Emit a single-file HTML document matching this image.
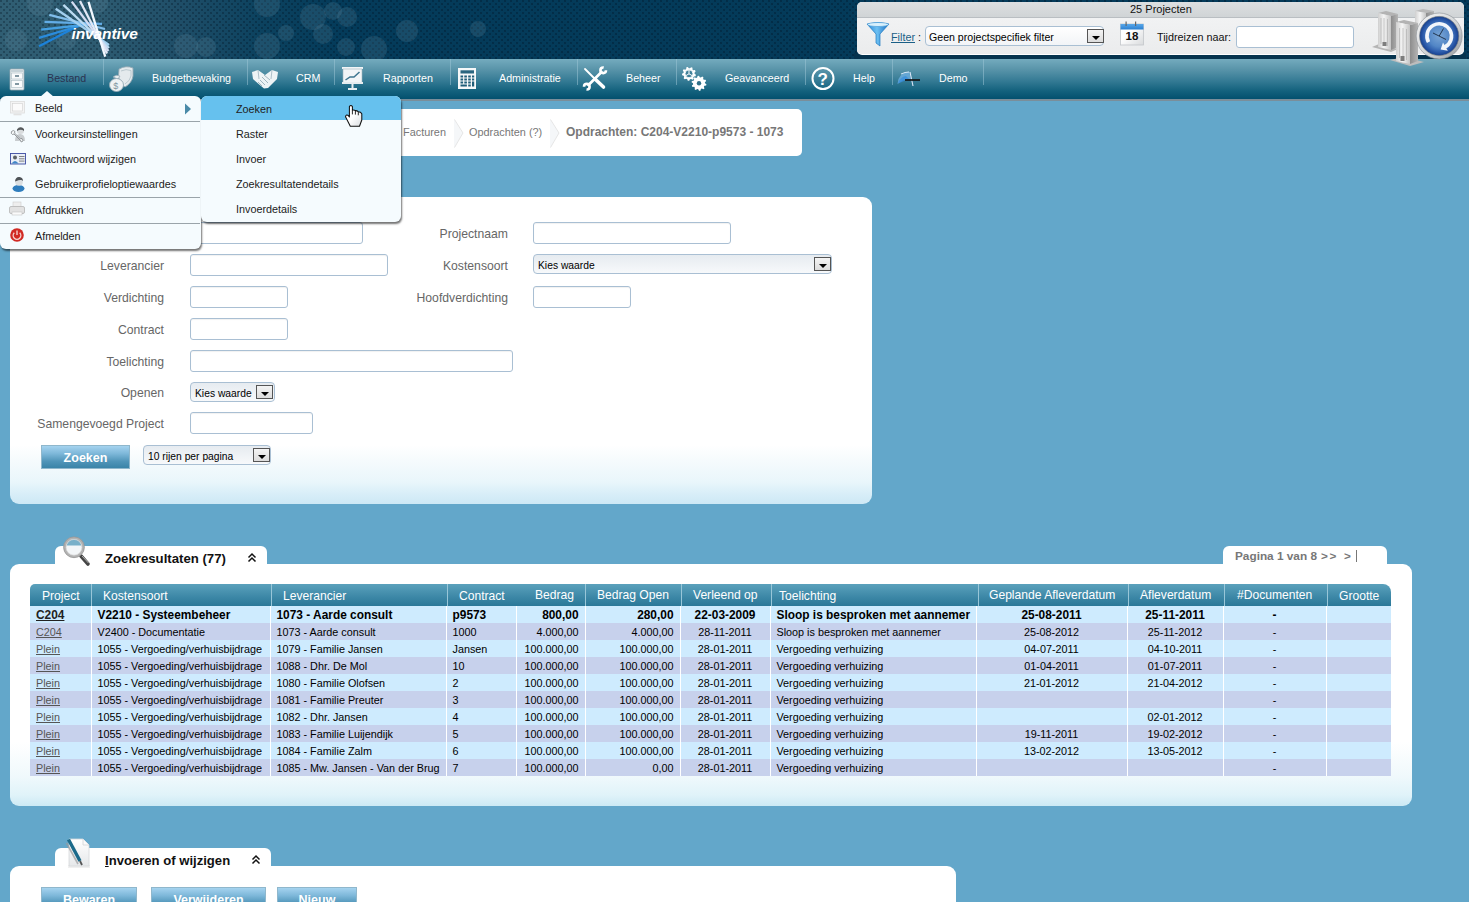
<!DOCTYPE html>
<html><head><meta charset="utf-8">
<style>
*{margin:0;padding:0;box-sizing:border-box}
html,body{width:1469px;height:902px;overflow:hidden}
body{background:#63a7ca;font-family:"Liberation Sans",sans-serif;position:relative;color:#000}
.abs{position:absolute}
#hdr{left:0;top:0;width:1469px;height:59px;background:radial-gradient(circle at 1px 1px,rgba(0,15,30,.3) 0.8px,transparent 1.2px) 0 0/6px 6px,radial-gradient(circle at 1px 1px,rgba(0,15,30,.3) 0.8px,transparent 1.2px) 3px 3px/6px 6px,linear-gradient(90deg,#305e73 0px,#2d5b71 100px,#1f4e68 180px,#0c425f 260px,#043b5a 340px,#033a59 1469px)}
#nav{left:0;top:59px;width:1469px;height:40px;background:linear-gradient(#74abbe 0%,#5a95aa 25%,#347a94 55%,#13617d 80%,#03506e 100%)}
#navline{left:0;top:99px;width:1469px;height:2px;background:#7a8e9a}
.sep{position:absolute;top:59px;width:1px;height:26px;background:rgba(160,200,215,.5)}
.nt{position:absolute;top:71px;font-size:10.7px;color:#fff;line-height:14px;white-space:nowrap}
.panel{position:absolute;background:#fff;border-radius:9px}
.lbl{position:absolute;font-size:12.2px;color:#666;text-align:right;white-space:nowrap;line-height:14px}
.inp{position:absolute;background:#fff;border:1px solid #a9bfd3;border-radius:3px;box-shadow:inset 0 1px 1px rgba(0,0,0,.06)}
.sel{position:absolute;border:1px solid #a9bfd3;border-radius:4px;background:linear-gradient(#e6ebf0,#f7f9fb);font-size:10.3px;color:#000;line-height:20px;padding-left:4px;padding-top:1px;white-space:nowrap}
.selb{position:absolute;width:17px;height:14px;border:1px solid #555;background:linear-gradient(#f4f4f4,#dcdcdc)}
.selb:after{content:"";position:absolute;left:4px;top:6px;border-left:4px solid transparent;border-right:4px solid transparent;border-top:4px solid #000}
.btn{position:absolute;height:24px;background:linear-gradient(#a5d3ef 0%,#7db7d9 35%,#4f94b8 70%,#3a84a8 100%);border:1px solid #8fb7cc;color:#fff;font-weight:bold;font-size:12.5px;text-align:center;line-height:24px}
.menu{position:absolute;background:#f5fbfe;border-radius:6px;box-shadow:1px 2px 2px rgba(0,0,0,.55)}
.mi{position:absolute;left:35px;font-size:10.8px;color:#222;white-space:nowrap;line-height:14px}
.msep{position:absolute;left:0;width:200px;height:1px;background:#9aa4aa}
table{border-collapse:collapse;position:absolute;table-layout:fixed;font-size:10.8px;line-height:17px}
td:first-child{border-left:0}
.br td>*,.br td{}
.br td{padding-top:2px;line-height:15px}
.hd{position:absolute;top:589px;font-size:12.1px;line-height:14px;color:#fff;white-space:nowrap}
td{font-size:inherit;height:17px;max-height:17px;line-height:16px;padding:1px 6px 0 6px;white-space:nowrap;overflow:hidden;border-left:1px solid #fff}
</style></head><body>
<div id="hdr" class="abs"></div>
<div id="nav" class="abs"></div>
<div id="navline" class="abs"></div>
<!-- bokeh circles -->
<svg class="abs" style="left:0;top:0" width="860" height="59">
<g fill="#6a93a6" fill-opacity="0.2">
<circle cx="40" cy="3" r="13"/><circle cx="98" cy="3" r="10"/><circle cx="66" cy="40" r="10"/><circle cx="186" cy="46" r="12"/><circle cx="206" cy="47" r="10"/>
<circle cx="267" cy="4" r="13"/><circle cx="267" cy="46" r="13"/><circle cx="313" cy="17" r="13"/><circle cx="333" cy="11" r="9"/><circle cx="347" cy="17" r="10"/>
<circle cx="286" cy="33" r="8"/><circle cx="323" cy="34" r="10"/><circle cx="346" cy="47" r="9"/><circle cx="374" cy="49" r="13"/><circle cx="407" cy="31" r="11"/>
<circle cx="478" cy="29" r="8"/><circle cx="16" cy="40" r="11"/>
</g>
</svg>
<!-- logo -->
<svg class="abs" style="left:30px;top:0" width="120" height="59">
<g stroke-width="2.3" stroke-linecap="butt"><line x1="9" y1="46.3" x2="50" y2="25" stroke="#1c82da"/><line x1="9" y1="37.9" x2="54" y2="24.5" stroke="#2a8cdd"/><line x1="11.200000000000003" y1="29.6" x2="62" y2="24" stroke="#45a0e2"/><line x1="14.5" y1="21.9" x2="72" y2="23.8" stroke="#62ace6"/><line x1="19.299999999999997" y1="14.8" x2="75" y2="29" stroke="#80bdeb"/><line x1="25.700000000000003" y1="8.7" x2="79" y2="45" stroke="#a2cfef"/><line x1="33.4" y1="4.8" x2="79" y2="48" stroke="#bcdcf3"/><line x1="41.8" y1="1.6" x2="78.4" y2="51" stroke="#d3dcf2"/><line x1="50" y1="1" x2="77" y2="53.5" stroke="#e2e8f6"/><line x1="58.5" y1="1.9" x2="75.2" y2="56.6" stroke="#f2f8ff"/></g>
<text x="41.5" y="38.5" font-family="Liberation Sans" font-weight="bold" font-style="italic" font-size="15.5" fill="#fff" letter-spacing="-0.1">invantive</text>
</svg>

<div class="sep" style="left:103px"></div><div class="sep" style="left:247px"></div><div class="sep" style="left:334px"></div><div class="sep" style="left:450px"></div><div class="sep" style="left:577px"></div><div class="sep" style="left:676px"></div><div class="sep" style="left:805px"></div><div class="sep" style="left:892px"></div><div class="sep" style="left:983px"></div><div class="nt" style="left:47px;color:#2a3250">Bestand</div><div class="nt" style="left:152px;">Budgetbewaking</div><div class="nt" style="left:296px;">CRM</div><div class="nt" style="left:383px;">Rapporten</div><div class="nt" style="left:499px;">Administratie</div><div class="nt" style="left:626px;">Beheer</div><div class="nt" style="left:725px;">Geavanceerd</div><div class="nt" style="left:853px;">Help</div><div class="nt" style="left:939px;">Demo</div>
<svg class="abs" style="left:0;top:59px" width="1000" height="40">
<!-- cabinet -->
<g transform="translate(10,10)">
<rect x="0" y="0" width="14" height="21" rx="1" fill="#eef2f4" stroke="#94a7b0" stroke-width="0.8"/>
<rect x="1" y="1" width="12" height="2" fill="#c6d2d8"/>
<rect x="1.5" y="4" width="11" height="6" fill="#fafbfc" stroke="#a9b9c1" stroke-width="0.6"/>
<rect x="1.5" y="11.5" width="11" height="7" fill="#fafbfc" stroke="#a9b9c1" stroke-width="0.6"/>
<rect x="5" y="6.3" width="4" height="1.4" fill="#4d6b7b"/>
<rect x="5" y="14.3" width="4" height="1.4" fill="#4d6b7b"/>
</g>
<!-- money shield -->
<g>
<path d="M119 10 Q126 6 133 9 L133 17 Q132 24 125 28 Q119 24 118.5 17 Z" fill="#e4eaed" stroke="#93a8b3" stroke-width="0.9"/>
<path d="M121 12 Q126 9.5 131 11.5 L131 17 Q130 22 125 25" fill="none" stroke="#b5c4cb" stroke-width="0.9"/>
<path d="M113 18 Q116 15 120 17 L118 20 Z" fill="#e9eef0" stroke="#93a8b3" stroke-width="0.7"/>
<ellipse cx="116.5" cy="26" rx="7" ry="6.5" fill="#eef2f4" stroke="#93a8b3" stroke-width="0.9"/>
<text x="113.3" y="30" font-size="9" font-family="Liberation Sans" fill="#7e95a1">$</text>
</g>
<!-- handshake -->
<g>
<path d="M252 13 L258 11 L265 16 L272 11 L278 13 L277 20 L268 29 L264 29.5 L261 27 L253 20 Z" fill="#eef3f5"/>
<path d="M258 11 L259 20 M272 11 L271 20" stroke="#9db3be" stroke-width="0.8"/>
<path d="M262 18 L268 24 M260 21 L265 26 M264 16 L270 21 M258 23 L262 27" stroke="#8fa7b3" stroke-width="0.8"/>
</g>
<!-- presentation -->
<g transform="translate(342,8)">
<rect x="0" y="0" width="21" height="2" fill="#f2f5f7"/>
<rect x="1" y="2" width="19" height="14" fill="#f2f5f7" stroke="#9fb3bd" stroke-width="0.6"/>
<polyline points="3.5,13 8,10 12,10 17.5,5" fill="none" stroke="#3f7690" stroke-width="1.5"/>
<rect x="0" y="15" width="21" height="2" fill="#e6ecef"/>
<rect x="9.5" y="17" width="2" height="5" fill="#e6ecef"/>
<rect x="6" y="21" width="9" height="2" fill="#e6ecef"/>
</g>
<!-- calculator -->
<g transform="translate(458,9)">
<rect x="0" y="0" width="18" height="21" fill="#f6f8f9"/>
<rect x="2.5" y="2.3" width="13.5" height="3.2" fill="#2a6680"/>
<g fill="#1f5d78">
<rect x="2.5" y="7.5" width="2.6" height="2"/><rect x="6.3" y="7.5" width="2.6" height="2"/><rect x="10.2" y="7.5" width="2.6" height="2"/><rect x="14" y="7.5" width="2.2" height="2"/>
<rect x="2.5" y="10.5" width="2.6" height="2"/><rect x="6.3" y="10.5" width="2.6" height="2"/><rect x="10.2" y="10.5" width="2.6" height="2"/><rect x="14" y="10.5" width="2.2" height="2"/>
<rect x="2.5" y="13.5" width="2.6" height="2"/><rect x="6.3" y="13.5" width="2.6" height="2"/><rect x="10.2" y="13.5" width="2.6" height="2"/><rect x="14" y="13.5" width="2.2" height="5"/>
<rect x="2.5" y="16.5" width="6.4" height="2"/><rect x="10.2" y="16.5" width="2.6" height="2"/>
</g>
</g>
<!-- tools -->
<g transform="translate(0,-59)">
<line x1="585" y1="69" x2="596" y2="80" stroke="#fff" stroke-width="1.8" stroke-linecap="round"/>
<line x1="595" y1="79" x2="603.5" y2="87" stroke="#fff" stroke-width="3.6" stroke-linecap="round"/>
<line x1="588.5" y1="85" x2="601.5" y2="72" stroke="#fff" stroke-width="2.6" stroke-linecap="round"/>
<circle cx="603.2" cy="70.3" r="2.8" fill="none" stroke="#fff" stroke-width="2.6" stroke-dasharray="13.4 4.2"/>
<circle cx="586.8" cy="86.7" r="2.8" fill="none" stroke="#fff" stroke-width="2.6" stroke-dasharray="13.6 4" stroke-dashoffset="9"/>
</g>
<!-- gears -->
<g transform="translate(0,-59)">
<path d="M694.60 73.80 L695.93 74.77 L695.58 76.19 L693.94 76.43 L693.29 77.40 L693.68 79.00 L692.50 79.86 L691.10 78.99 L689.97 79.31 L689.24 80.80 L687.78 80.69 L687.27 79.13 L686.20 78.65 L684.69 79.32 L683.64 78.30 L684.25 76.77 L683.74 75.72 L682.15 75.26 L682.00 73.80 L683.45 73.02 L683.74 71.88 L682.82 70.51 L683.64 69.30 L685.25 69.64 L686.20 68.95 L686.38 67.31 L687.78 66.91 L688.80 68.20 L689.97 68.29 L691.16 67.14 L692.50 67.74 L692.45 69.39 L693.29 70.20 L694.94 70.09 L695.58 71.41 L694.48 72.64 Z" fill="#fff"/>
<circle cx="689" cy="73.8" r="4" fill="#3f8099"/>
<circle cx="689" cy="73.8" r="4" fill="none" stroke="#fff" stroke-width="0.9"/>
<path d="M689 73.8 L689 69.8 M689 73.8 L685.6 75.8 M689 73.8 L692.4 75.8" stroke="#fff" stroke-width="1"/>
<path d="M705.00 83.30 L706.44 84.24 L706.13 85.62 L704.43 85.85 L703.85 86.83 L704.47 88.43 L703.41 89.37 L701.89 88.56 L700.85 89.01 L700.41 90.67 L699.00 90.80 L698.25 89.25 L697.15 89.01 L695.81 90.09 L694.59 89.37 L694.89 87.67 L694.15 86.83 L692.43 86.91 L691.87 85.62 L693.11 84.42 L693.00 83.30 L691.56 82.36 L691.87 80.98 L693.57 80.75 L694.15 79.77 L693.53 78.17 L694.59 77.23 L696.11 78.04 L697.15 77.59 L697.59 75.93 L699.00 75.80 L699.75 77.35 L700.85 77.59 L702.19 76.51 L703.41 77.23 L703.11 78.93 L703.85 79.77 L705.57 79.69 L706.13 80.98 L704.89 82.18 Z" fill="#fff"/>
<circle cx="699" cy="83.3" r="2.2" fill="#2f6f88"/>
</g>
<!-- help -->
<g transform="translate(811,8)">
<circle cx="12" cy="11.5" r="10.5" fill="none" stroke="#fff" stroke-width="2"/>
<text x="6.5" y="18" font-size="17" font-weight="bold" font-family="Liberation Sans" fill="#fff">?</text>
</g>
<!-- demo -->
<g transform="translate(0,-59)">
<path d="M897.5 84 Q898 73 909 71.5 L911 79 L903 80 Z" fill="#6fb0e4" opacity="0.75"/>
<path d="M898 83.5 Q900 77 906 76 L909 79 Z" fill="#3a8fdc" opacity="0.8"/>
<path d="M901 74 Q905 72 909 72" stroke="#d6e8f6" stroke-width="1" fill="none"/>
<line x1="910" y1="72" x2="913" y2="86" stroke="#dfe9fa" stroke-width="1.1"/>
<rect x="905" y="79" width="15" height="2" fill="#151515" opacity="0.85"/>
</g>
</svg>


<!-- filter box -->
<div class="abs" style="left:854px;top:53px;width:612px;height:6px;background:#05334e"></div>
<div class="abs" style="left:857px;top:2px;width:607px;height:52px;background:#efefef;border-radius:5px;overflow:hidden;box-shadow:0 1px 0 #fff">
 <div class="abs" style="left:0;top:0;width:607px;height:16px;background:linear-gradient(#dcdfe1,#d0d4d6);border-bottom:1px solid #b9bec2"></div>
 <div class="abs" style="left:273px;top:0px;font-size:11px;line-height:14px;color:#111;white-space:nowrap">25 Projecten</div>
 <div class="abs" style="left:0;top:16px;width:607px;height:36px;background:linear-gradient(#f1f2f3,#ebeced)"></div>
 <div class="abs" style="left:34px;top:28px;font-size:10.8px;line-height:14px;color:#1a5f86;text-decoration:underline;white-space:nowrap">Filter</div>
 <div class="abs" style="left:61px;top:28px;font-size:10.8px;line-height:14px;color:#111">:</div>
 <div class="abs" style="left:68px;top:24px;width:179px;height:20px;border:1px solid #a9bfd3;border-radius:4px;background:linear-gradient(#fff,#f2f4f7)"></div>
 <div class="abs" style="left:72px;top:28px;font-size:10.6px;line-height:14px;color:#000;white-space:nowrap">Geen projectspecifiek filter</div>
 <div class="selb" style="left:230px;top:27px"></div>
 <div class="abs" style="left:300px;top:28px;font-size:10.8px;line-height:14px;color:#111;white-space:nowrap">Tijdreizen naar:</div>
 <div class="abs" style="left:379px;top:24px;width:118px;height:22px;border:1px solid #a9bfd3;border-radius:3px;background:#fff"></div>
</div>
<!-- funnel -->
<svg class="abs" style="left:866px;top:22px" width="24" height="26">
<defs><linearGradient id="fg" x1="0" x2="1"><stop offset="0" stop-color="#2a86d6"/><stop offset="0.45" stop-color="#6cc0f2"/><stop offset="1" stop-color="#1c6fc4"/></linearGradient></defs>
<path d="M1 2 Q12 -1 23 2 L14 12 L14 24 L10 21 L10 12 Z" fill="url(#fg)" stroke="#1f79bf" stroke-width="0.7"/>
<ellipse cx="12" cy="2.5" rx="10.5" ry="2" fill="#d9f0fc" stroke="#3a95d5" stroke-width="0.6"/>
</svg>
<!-- calendar -->
<svg class="abs" style="left:1119px;top:20px" width="27" height="28">
<defs><linearGradient id="calb" x1="0" y1="0" x2="0" y2="1"><stop offset="0" stop-color="#5aa8ea"/><stop offset="1" stop-color="#2a7fd0"/></linearGradient>
<linearGradient id="calw" x1="0" y1="0" x2="1" y2="1"><stop offset="0.4" stop-color="#fff"/><stop offset="1" stop-color="#d8dadc"/></linearGradient></defs>
<rect x="1.5" y="4" width="23" height="21" fill="url(#calw)" stroke="#c2c6ca" stroke-width="0.8"/>
<rect x="1.5" y="4" width="23" height="5.5" fill="url(#calb)"/>
<rect x="6.5" y="1.5" width="1.2" height="4.5" fill="#666"/><rect x="16" y="1.5" width="1.2" height="4.5" fill="#666"/>
<text x="13" y="19.6" text-anchor="middle" font-size="11.5" font-weight="bold" font-family="Liberation Sans" fill="#111">18</text>
</svg>
<!-- buildings + clock -->
<svg class="abs" style="left:1368px;top:6px" width="101" height="62">
<defs>
<linearGradient id="bf" x1="0" x2="1"><stop offset="0" stop-color="#cfcfcf"/><stop offset="0.45" stop-color="#f5f5f5"/><stop offset="1" stop-color="#c4c4c4"/></linearGradient>
<linearGradient id="br" x1="0" x2="1"><stop offset="0" stop-color="#8c8c8c"/><stop offset="1" stop-color="#b5b5b5"/></linearGradient>
<radialGradient id="cg" cx="0.5" cy="0.5" r="0.5"><stop offset="0" stop-color="#7aa6d6"/><stop offset="0.55" stop-color="#5286c6"/><stop offset="0.8" stop-color="#2f5fae"/><stop offset="1" stop-color="#163f8e"/></radialGradient>
<linearGradient id="rg" x1="0" y1="0" x2="1" y2="1"><stop offset="0" stop-color="#f7f7f7"/><stop offset="0.6" stop-color="#cfd2d4"/><stop offset="1" stop-color="#8e9398"/></linearGradient>
</defs>
<!-- C -->
<polygon points="47,5 55,3 66,5 58,7" fill="#b9b9b9"/>
<polygon points="47,5 58,7 58,40 47,38" fill="url(#bf)"/>
<polygon points="58,7 66,5 66,38 58,40" fill="url(#br)"/>
<!-- A -->
<polygon points="4,41 23,46 30,43 11,38" fill="#b5b5b5"/>
<polygon points="10,7 18,5 30,8 23,10" fill="#b3b3b3"/>
<polygon points="10,7 23,10 23,44 10,41" fill="url(#bf)"/>
<polygon points="23,10 30,8 30,41 23,44" fill="url(#br)"/>
<g stroke="#b0b0b0" stroke-width="0.7"><line x1="13" y1="12" x2="13" y2="38"/><line x1="16" y1="12" x2="16" y2="39"/><line x1="19.5" y1="13" x2="19.5" y2="40"/></g>
<rect x="14.5" y="36" width="4" height="4" fill="#7d7d7d"/>
<!-- B -->
<polygon points="22,54 42,60 56,56 36,51" fill="#bdbdbd"/>
<polygon points="28,16 36,14 50,17 42,19" fill="#b3b3b3"/>
<polygon points="28,16 42,19 42,58 28,55" fill="url(#bf)"/>
<polygon points="42,19 50,17 50,55 42,58" fill="url(#br)"/>
<g stroke="#b0b0b0" stroke-width="0.7"><line x1="31.5" y1="22" x2="31.5" y2="52"/><line x1="35" y1="22" x2="35" y2="53"/><line x1="38.5" y1="23" x2="38.5" y2="54"/></g>
<rect x="32.5" y="50" width="4" height="5" fill="#7d7d7d"/>
<!-- clock -->
<circle cx="71.2" cy="30" r="23" fill="url(#rg)"/>
<circle cx="71.2" cy="30" r="23" fill="none" stroke="#8a8f94" stroke-width="0.6"/>
<circle cx="71.2" cy="30" r="19.6" fill="url(#cg)" stroke="#6d7378" stroke-width="0.6"/>
<path d="M60.55 36.15 A12.3 12.3 0 1 1 76.5 41.2" fill="none" stroke="#f2f6fb" stroke-width="3.6"/>
<polygon points="72.6,43.6 79.8,44.7 75.0,36.6" fill="#f2f6fb"/>
<line x1="71.2" y1="30" x2="75.5" y2="22.5" stroke="#1a2a40" stroke-width="0.9"/>
<line x1="65" y1="27" x2="78" y2="33.5" stroke="#1a2a40" stroke-width="0.9"/>
</svg>


<!-- breadcrumb -->
<div class="panel" style="left:10px;top:109px;width:792px;height:47px;border-radius:5px"></div>
<div class="abs" style="left:403px;top:125px;font-size:10.9px;line-height:14px;color:#777;white-space:nowrap">Facturen</div>
<div class="abs" style="left:469px;top:125px;font-size:10.9px;line-height:14px;color:#777;white-space:nowrap">Opdrachten (?)</div>
<div class="abs" style="left:566px;top:125px;font-size:12px;font-weight:bold;line-height:14px;color:#777;white-space:nowrap">Opdrachten: C204-V2210-p9573 - 1073</div>


<svg class="abs" style="left:454px;top:118px" width="12" height="31"><polygon points="0,1 9,15 0,30" fill="#f5f7f9"/><polyline points="0.5,1.5 9,15 0.5,29.5" fill="none" stroke="#e2e2e2" stroke-width="0.9"/></svg><svg class="abs" style="left:550px;top:118px" width="12" height="31"><polygon points="0,1 9,15 0,30" fill="#f5f7f9"/><polyline points="0.5,1.5 9,15 0.5,29.5" fill="none" stroke="#e2e2e2" stroke-width="0.9"/></svg>
<!-- form panel -->
<div class="panel" style="left:10px;top:197px;width:862px;height:307px;background:linear-gradient(#fff 0px,#fff 248px,#f6fbfd 263px,#e9f6fb 285px,#d8eef8 297px,#cde8f5 307px)"></div>
<div class="lbl" style="left:300px;top:227px;width:208px">Projectnaam</div>
<div class="inp" style="left:533px;top:222px;width:198px;height:22px"></div>
<div class="inp" style="left:190px;top:222px;width:173px;height:22px"></div>
<div class="lbl" style="left:0;top:259px;width:164px">Leverancier</div>
<div class="inp" style="left:190px;top:254px;width:198px;height:22px"></div>
<div class="lbl" style="left:300px;top:259px;width:208px">Kostensoort</div>
<div class="sel" style="left:533px;top:254px;width:299px;height:20px">Kies waarde</div>
<div class="selb" style="left:814px;top:257px"></div>
<div class="lbl" style="left:0;top:291px;width:164px">Verdichting</div>
<div class="inp" style="left:190px;top:286px;width:98px;height:22px"></div>
<div class="lbl" style="left:300px;top:291px;width:208px">Hoofdverdichting</div>
<div class="inp" style="left:533px;top:286px;width:98px;height:22px"></div>
<div class="lbl" style="left:0;top:323px;width:164px">Contract</div>
<div class="inp" style="left:190px;top:318px;width:98px;height:22px"></div>
<div class="lbl" style="left:0;top:355px;width:164px">Toelichting</div>
<div class="inp" style="left:190px;top:350px;width:323px;height:22px"></div>
<div class="lbl" style="left:0;top:386px;width:164px">Openen</div>
<div class="sel" style="left:190px;top:382px;width:85px;height:20px">Kies waarde</div>
<div class="selb" style="left:256px;top:385px"></div>
<div class="lbl" style="left:0;top:417px;width:164px">Samengevoegd Project</div>
<div class="inp" style="left:190px;top:412px;width:123px;height:22px"></div>
<div class="btn" style="left:41px;top:445px;width:89px">Zoeken</div>
<div class="sel" style="left:143px;top:445px;width:128px;height:20px">10 rijen per pagina</div>
<div class="selb" style="left:253px;top:448px"></div>


<!-- results -->
<div class="panel" style="left:55px;top:546px;width:212px;height:30px;border-radius:6px 6px 0 0"></div>
<div class="panel" style="left:1223px;top:546px;width:164px;height:30px;border-radius:6px 6px 0 0"></div>
<div class="panel" style="left:10px;top:564px;width:1402px;height:242px;background:linear-gradient(#fff 0px,#fff 178px,#f0f9fc 212px,#e0f3f9 231px,#cce9f4 242px)"></div>
<div class="abs" style="left:105px;top:551px;font-size:13.2px;font-weight:bold;line-height:16px;color:#111;white-space:nowrap">Zoekresultaten (77)</div>
<div class="abs" style="left:1235px;top:549px;font-size:11.8px;font-weight:bold;line-height:14px;color:#777;white-space:nowrap">Pagina 1 van 8</div>
<div class="abs" style="left:1321px;top:549px;font-size:11.8px;font-weight:bold;line-height:14px;color:#777;white-space:nowrap;letter-spacing:1.5px">&gt;&gt;</div>
<div class="abs" style="left:1344px;top:549px;font-size:11.8px;font-weight:bold;line-height:14px;color:#777;white-space:nowrap">&gt;</div>
<div class="abs" style="left:1355.5px;top:550px;width:1.6px;height:12px;background:#777"></div>
<svg class="abs" style="left:247px;top:552px" width="11" height="12"><path d="M1.5 5.5 L5 2 L8.5 5.5 M1.5 9.5 L5 6 L8.5 9.5" fill="none" stroke="#111" stroke-width="1.5"/></svg>
<svg class="abs" style="left:61px;top:536px" width="32" height="32">
<line x1="20" y1="20" x2="27" y2="28" stroke="#444" stroke-width="3.6" stroke-linecap="round"/>
<line x1="21" y1="20" x2="27.5" y2="27" stroke="#c9c9c9" stroke-width="0.8"/>
<circle cx="13" cy="11.3" r="9.3" fill="#f3f6f8" stroke="#b3b3b3" stroke-width="2.6"/>
<path d="M5.5 9.5 A7.6 7.6 0 0 1 20.5 9.5 Z" fill="#79b0c9"/>
<circle cx="13" cy="11.3" r="10.4" fill="none" stroke="#8e8e8e" stroke-width="0.6"/>
<circle cx="13" cy="11.3" r="7.9" fill="none" stroke="#d8d8d8" stroke-width="0.7"/>
</svg>
<div class="abs" style="left:30px;top:584px;width:1361px;height:22px;border-radius:5px 8px 0 0;background:linear-gradient(#5ba1bc,#3c87a6 60%,#2b7898)"></div>
<div class="abs" style="left:91px;top:584px;width:1px;height:22px;background:#98c6d8"></div>
<div class="abs" style="left:271px;top:584px;width:1px;height:22px;background:#98c6d8"></div>
<div class="abs" style="left:447px;top:584px;width:1px;height:22px;background:#98c6d8"></div>
<div class="abs" style="left:585px;top:584px;width:1px;height:22px;background:#98c6d8"></div>
<div class="abs" style="left:681px;top:584px;width:1px;height:22px;background:#98c6d8"></div>
<div class="abs" style="left:771px;top:584px;width:1px;height:22px;background:#98c6d8"></div>
<div class="abs" style="left:978px;top:584px;width:1px;height:22px;background:#98c6d8"></div>
<div class="abs" style="left:1128px;top:584px;width:1px;height:22px;background:#98c6d8"></div>
<div class="abs" style="left:1224px;top:584px;width:1px;height:22px;background:#98c6d8"></div>
<div class="abs" style="left:1327px;top:584px;width:1px;height:22px;background:#98c6d8"></div>
<div class="hd" style="left:42px">Project</div>
<div class="hd" style="left:103px">Kostensoort</div>
<div class="hd" style="left:283px">Leverancier</div>
<div class="hd" style="left:459px">Contract</div>
<div class="hd" style="left:535px;top:588px">Bedrag</div>
<div class="hd" style="left:597px;top:588px">Bedrag Open</div>
<div class="hd" style="left:693px;top:588px">Verleend op</div>
<div class="hd" style="left:779px">Toelichting</div>
<div class="hd" style="left:989px;top:588px">Geplande Afleverdatum</div>
<div class="hd" style="left:1140px;top:588px">Afleverdatum</div>
<div class="hd" style="left:1237px;top:588px">#Documenten</div>
<div class="hd" style="left:1339px;top:589px">Grootte</div>
<table style="left:30px;top:606px;width:1361px"><colgroup><col style="width:61px"><col style="width:179px"><col style="width:176px"><col style="width:70px"><col style="width:69px"><col style="width:95px"><col style="width:90px"><col style="width:206px"><col style="width:151px"><col style="width:96px"><col style="width:103px"><col style="width:65px"></colgroup><tr style="background:#ceebfe;font-weight:bold;font-size:11.9px" class="br"><td style="text-align:left;color:#222"><u>C204</u></td><td style="text-align:left">V2210 - Systeembeheer</td><td style="text-align:left">1073 - Aarde consult</td><td style="text-align:left">p9573</td><td style="text-align:right">800,00</td><td style="text-align:right">280,00</td><td style="text-align:center">22-03-2009</td><td style="text-align:left">Sloop is besproken met aannemer</td><td style="text-align:center">25-08-2011</td><td style="text-align:center">25-11-2011</td><td style="text-align:center">-</td><td style="text-align:left"></td></tr><tr style="background:#c7d1ec"><td style="text-align:left;color:#555"><u>C204</u></td><td style="text-align:left">V2400 - Documentatie</td><td style="text-align:left">1073 - Aarde consult</td><td style="text-align:left">1000</td><td style="text-align:right">4.000,00</td><td style="text-align:right">4.000,00</td><td style="text-align:center">28-11-2011</td><td style="text-align:left">Sloop is besproken met aannemer</td><td style="text-align:center">25-08-2012</td><td style="text-align:center">25-11-2012</td><td style="text-align:center">-</td><td style="text-align:left"></td></tr><tr style="background:#ceebfe"><td style="text-align:left;color:#555"><u>Plein</u></td><td style="text-align:left">1055 - Vergoeding/verhuisbijdrage</td><td style="text-align:left">1079 - Familie Jansen</td><td style="text-align:left">Jansen</td><td style="text-align:right">100.000,00</td><td style="text-align:right">100.000,00</td><td style="text-align:center">28-01-2011</td><td style="text-align:left">Vergoeding verhuizing</td><td style="text-align:center">04-07-2011</td><td style="text-align:center">04-10-2011</td><td style="text-align:center">-</td><td style="text-align:left"></td></tr><tr style="background:#c7d1ec"><td style="text-align:left;color:#555"><u>Plein</u></td><td style="text-align:left">1055 - Vergoeding/verhuisbijdrage</td><td style="text-align:left">1088 - Dhr. De Mol</td><td style="text-align:left">10</td><td style="text-align:right">100.000,00</td><td style="text-align:right">100.000,00</td><td style="text-align:center">28-01-2011</td><td style="text-align:left">Vergoeding verhuizing</td><td style="text-align:center">01-04-2011</td><td style="text-align:center">01-07-2011</td><td style="text-align:center">-</td><td style="text-align:left"></td></tr><tr style="background:#ceebfe"><td style="text-align:left;color:#555"><u>Plein</u></td><td style="text-align:left">1055 - Vergoeding/verhuisbijdrage</td><td style="text-align:left">1080 - Familie Olofsen</td><td style="text-align:left">2</td><td style="text-align:right">100.000,00</td><td style="text-align:right">100.000,00</td><td style="text-align:center">28-01-2011</td><td style="text-align:left">Vergoeding verhuizing</td><td style="text-align:center">21-01-2012</td><td style="text-align:center">21-04-2012</td><td style="text-align:center">-</td><td style="text-align:left"></td></tr><tr style="background:#c7d1ec"><td style="text-align:left;color:#555"><u>Plein</u></td><td style="text-align:left">1055 - Vergoeding/verhuisbijdrage</td><td style="text-align:left">1081 - Familie Preuter</td><td style="text-align:left">3</td><td style="text-align:right">100.000,00</td><td style="text-align:right">100.000,00</td><td style="text-align:center">28-01-2011</td><td style="text-align:left">Vergoeding verhuizing</td><td style="text-align:center"></td><td style="text-align:center"></td><td style="text-align:center">-</td><td style="text-align:left"></td></tr><tr style="background:#ceebfe"><td style="text-align:left;color:#555"><u>Plein</u></td><td style="text-align:left">1055 - Vergoeding/verhuisbijdrage</td><td style="text-align:left">1082 - Dhr. Jansen</td><td style="text-align:left">4</td><td style="text-align:right">100.000,00</td><td style="text-align:right">100.000,00</td><td style="text-align:center">28-01-2011</td><td style="text-align:left">Vergoeding verhuizing</td><td style="text-align:center"></td><td style="text-align:center">02-01-2012</td><td style="text-align:center">-</td><td style="text-align:left"></td></tr><tr style="background:#c7d1ec"><td style="text-align:left;color:#555"><u>Plein</u></td><td style="text-align:left">1055 - Vergoeding/verhuisbijdrage</td><td style="text-align:left">1083 - Familie Luijendijk</td><td style="text-align:left">5</td><td style="text-align:right">100.000,00</td><td style="text-align:right">100.000,00</td><td style="text-align:center">28-01-2011</td><td style="text-align:left">Vergoeding verhuizing</td><td style="text-align:center">19-11-2011</td><td style="text-align:center">19-02-2012</td><td style="text-align:center">-</td><td style="text-align:left"></td></tr><tr style="background:#ceebfe"><td style="text-align:left;color:#555"><u>Plein</u></td><td style="text-align:left">1055 - Vergoeding/verhuisbijdrage</td><td style="text-align:left">1084 - Familie Zalm</td><td style="text-align:left">6</td><td style="text-align:right">100.000,00</td><td style="text-align:right">100.000,00</td><td style="text-align:center">28-01-2011</td><td style="text-align:left">Vergoeding verhuizing</td><td style="text-align:center">13-02-2012</td><td style="text-align:center">13-05-2012</td><td style="text-align:center">-</td><td style="text-align:left"></td></tr><tr style="background:#c7d1ec"><td style="text-align:left;color:#555"><u>Plein</u></td><td style="text-align:left">1055 - Vergoeding/verhuisbijdrage</td><td style="text-align:left">1085 - Mw. Jansen - Van der Brug</td><td style="text-align:left">7</td><td style="text-align:right">100.000,00</td><td style="text-align:right">0,00</td><td style="text-align:center">28-01-2011</td><td style="text-align:left">Vergoeding verhuizing</td><td style="text-align:center"></td><td style="text-align:center"></td><td style="text-align:center">-</td><td style="text-align:left"></td></tr></table>


<!-- bottom section -->
<div class="panel" style="left:55px;top:848px;width:216px;height:30px;border-radius:6px 6px 0 0"></div>
<div class="panel" style="left:10px;top:866px;width:946px;height:60px"></div>
<div class="abs" style="left:105px;top:853px;font-size:13.1px;font-weight:bold;line-height:16px;color:#111;white-space:nowrap"><u>I</u>nvoeren of wijzigen</div>
<svg class="abs" style="left:251px;top:854px" width="11" height="12"><path d="M1.5 5.5 L5 2 L8.5 5.5 M1.5 9.5 L5 6 L8.5 9.5" fill="none" stroke="#111" stroke-width="1.5"/></svg>
<svg class="abs" style="left:63px;top:837px" width="30" height="33">
<defs><linearGradient id="dg" x1="0" y1="0" x2="0" y2="1"><stop offset="0" stop-color="#fff"/><stop offset="1" stop-color="#e6e8ea"/></linearGradient></defs>
<rect x="5" y="28" width="22" height="3" fill="#000" opacity="0.06"/>
<path d="M6 2 L20 2 L26 8 L26 29 L6 29 Z" fill="url(#dg)" stroke="#d5d8db" stroke-width="0.8"/>
<path d="M20 2 L20 8 L26 8" fill="#fafafa" stroke="#d0d3d6" stroke-width="0.8"/>
<line x1="3.5" y1="6" x2="15" y2="27" stroke="#9a9a9a" stroke-width="1.6" opacity="0.7"/>
<line x1="5.5" y1="2.5" x2="17" y2="24" stroke="#1b6a8a" stroke-width="3.4" stroke-linecap="butt"/>
<line x1="17" y1="24" x2="19" y2="28" stroke="#555" stroke-width="1.8"/>
</svg>
<div class="btn" style="left:41px;top:887px;width:96px">Bewaren</div>
<div class="btn" style="left:151px;top:887px;width:115px">Verwijderen</div>
<div class="btn" style="left:277px;top:887px;width:80px">Nieuw</div>
<!-- dropdown menu -->
<div class="menu" style="left:0;top:96px;width:201px;height:153px;border-radius:6px"></div>
<svg class="abs" style="left:40px;top:90px" width="14" height="8"><path d="M0 7 L7 1 L14 7 Z" fill="#f5fbfe"/></svg>
<div class="msep" style="top:121px"></div>
<div class="msep" style="top:197px"></div>
<div class="msep" style="top:223px"></div>
<div class="mi" style="top:101px">Beeld</div>
<div class="mi" style="top:127px">Voorkeursinstellingen</div>
<div class="mi" style="top:152px">Wachtwoord wijzigen</div>
<div class="mi" style="top:177px">Gebruikerprofieloptiewaardes</div>
<div class="mi" style="top:203px">Afdrukken</div>
<div class="mi" style="top:229px">Afmelden</div>
<svg class="abs" style="left:184px;top:103px" width="8" height="12"><path d="M1 0.5 L7 6 L1 11.5 Z" fill="#4a8aa8"/></svg>
<svg class="abs" style="left:0;top:96px" width="32" height="153">
<!-- monitor -->
<g transform="translate(10,5)"><rect x="0.5" y="0.5" width="14" height="11.5" fill="#f4f4f4" stroke="#dcdcdc" stroke-width="0.8"/><rect x="2.5" y="2.5" width="10" height="7.5" fill="#fbfbfb" stroke="#d0d0d0" stroke-width="0.6"/><rect x="3.5" y="12.5" width="8" height="1.8" fill="#e2e2e2"/></g>
<!-- settings person -->
<g transform="translate(11,30)"><path d="M4 15 Q4 8 9 8 Q14 8 14 15 Z" fill="#c9cdd0"/><circle cx="9.5" cy="4.5" r="3.6" fill="#d9dcde"/><path d="M6 3.5 Q9.5 -0.5 13 3 L13 5 Q10 2.5 6 5 Z" fill="#55595c"/><path d="M0.5 5.5 Q2.5 3.5 4 5.5 L3.5 7 L9.5 13 L11 12.5 Q13 14 11 16 Q9 15.5 9.5 14.5 L3 8 L1.5 8.5 Q-0.5 7.5 0.5 5.5 Z" fill="#f4f6f7" stroke="#7d8387" stroke-width="0.8"/></g>
<!-- id card -->
<g transform="translate(10,57)"><rect x="0.5" y="0.5" width="15" height="10.5" fill="#e9eef6" stroke="#3b4aa0" stroke-width="0.9"/><circle cx="5" cy="4.5" r="2" fill="#5b5f63"/><path d="M1.5 10.5 Q5 5.5 8.5 10.5 Z" fill="#3f86c8"/><line x1="9" y1="3.5" x2="14.5" y2="3.5" stroke="#666" stroke-width="0.8"/><line x1="9" y1="5.8" x2="14.5" y2="5.8" stroke="#666" stroke-width="0.8"/><line x1="9" y1="8.1" x2="14.5" y2="8.1" stroke="#666" stroke-width="0.8"/></g>
<!-- user -->
<g transform="translate(12,80)"><ellipse cx="6.5" cy="12.5" rx="6" ry="3.5" fill="#2f7dbd"/><circle cx="7" cy="6" r="3.8" fill="#dcdfe1"/><path d="M3 5.5 Q3.5 0.5 7.5 1 Q11 1.5 11 5 L9.5 4 Q7 3.5 4.5 5 Z" fill="#4e5256"/></g>
<!-- printer -->
<g transform="translate(9,106)"><rect x="4" y="0" width="8" height="5" fill="#eee" stroke="#ccc" stroke-width="0.6"/><rect x="0.5" y="4.5" width="15" height="7" rx="1.5" fill="#e2e2e2" stroke="#b5b5b5" stroke-width="0.8"/><rect x="3" y="10" width="10" height="3" fill="#fafafa" stroke="#bbb" stroke-width="0.5"/></g>
<!-- power -->
<g transform="translate(10,132)"><circle cx="7" cy="7" r="6.8" fill="#d12a24"/><path d="M4.3 4.8 A3.8 3.8 0 1 0 9.7 4.8" fill="none" stroke="#f6d3d0" stroke-width="1.4"/><line x1="7" y1="2.5" x2="7" y2="7" stroke="#f6d3d0" stroke-width="1.4"/></g>
</svg>
<!-- submenu -->
<div class="menu" style="left:201px;top:96px;width:200px;height:126px;border-radius:6px;overflow:hidden">
 <div class="abs" style="left:0;top:0;width:200px;height:24px;background:#66c1ee"></div>
</div>
<div class="mi" style="left:236px;top:102px">Zoeken</div>
<div class="mi" style="left:236px;top:127px">Raster</div>
<div class="mi" style="left:236px;top:152px">Invoer</div>
<div class="mi" style="left:236px;top:177px">Zoekresultatendetails</div>
<div class="mi" style="left:236px;top:202px">Invoerdetails</div>
<!-- cursor -->
<svg class="abs" style="left:345px;top:103px" width="19" height="26">
<defs><linearGradient id="hg" x1="0" y1="0" x2="1" y2="1"><stop offset="0.5" stop-color="#fff"/><stop offset="1" stop-color="#d9dcdf"/></linearGradient></defs>
<path d="M4.4 3.6 Q5.9 1.4 7.4 3.6 L7.4 7.2 Q9.2 6.6 10.4 7.6 Q12.2 7.6 13.2 8.7 Q15.7 8.6 16.8 10.8 L16.8 17 L14.5 23.3 L5.3 23.3 L0.9 14.6 Q0 12.9 1.5 12.1 Q3 11.6 4.4 14 Z" fill="url(#hg)" stroke="#111" stroke-width="1.05" stroke-linejoin="round"/>
<line x1="7.4" y1="7.3" x2="7.4" y2="11.4" stroke="#111" stroke-width="0.9"/>
<line x1="10.4" y1="7.8" x2="10.4" y2="11.6" stroke="#111" stroke-width="0.9"/>
<line x1="13.3" y1="8.8" x2="13.3" y2="12.3" stroke="#111" stroke-width="0.9"/>
</svg>

</body></html>
